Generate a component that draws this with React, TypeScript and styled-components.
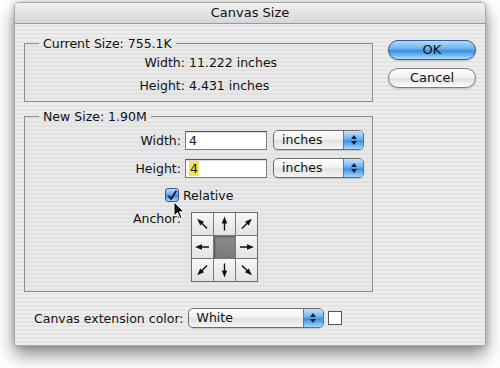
import React from 'react'
import styled, { createGlobalStyle } from 'styled-components'

const GlobalStyle = createGlobalStyle`
	html, body {
		margin: 0;
		padding: 0;
		background: #ffffff;
	}
	body {
		font-family: 'DejaVu Sans', 'Liberation Sans', sans-serif;
		font-size: 12.5px;
		color: #111;
	}
`

const stripes = `repeating-linear-gradient(to bottom, #ededed 0px, #ededed 2px, #e5e5e5 2px, #e5e5e5 4px)`

/** 锚点方向，角度从正上方顺时针 */
const anchors = [315, 0, 45, 270, -1, 90, 225, 180, 135]

function Arrow({ angle }: { angle: number }) {
	return (
		<svg width='21' height='22' viewBox='0 0 21 22'>
			<g transform={`rotate(${angle} 10.5 11)`}>
				<line x1='10.5' y1='17.5' x2='10.5' y2='8.5' stroke='#111' strokeWidth='1.4' />
				<polygon points='10.5,3.5 7.8,10.5 13.2,10.5' fill='#111' />
			</g>
		</svg>
	)
}

function Stepper() {
	return (
		<svg width='8' height='12' viewBox='0 0 8 12'>
			<polygon points='4,1 7,5 1,5' fill='#10233f' />
			<polygon points='4,11 7,7 1,7' fill='#10233f' />
		</svg>
	)
}

function Popup({ value, width }: { value: string; width: number }) {
	return (
		<SelectBox $width={width}>
			<SelectText>{value}</SelectText>
			<SelectArrows>
				<Stepper />
			</SelectArrows>
		</SelectBox>
	)
}

function App() {
	return (
		<Page>
			<GlobalStyle />
			<Window>
				<TitleBar>Canvas Size</TitleBar>
				<Body>
					<MainRow>
						<Groups>
							<Group>
								<Legend>Current Size: 755.1K</Legend>
								<InfoGrid>
									<Label>Width:</Label>
									<span>11.222 inches</span>
									<Label>Height:</Label>
									<span>4.431 inches</span>
								</InfoGrid>
							</Group>
							<Group $pad='6px 0 9px'>
								<Legend>New Size: 1.90M</Legend>
								<FormGrid>
									<Label>Width:</Label>
									<FieldRow>
										<TextInput>4</TextInput>
										<Popup value='inches' width={91} />
									</FieldRow>
									<Label>Height:</Label>
									<FieldRow>
										<TextInput>
											<Selected>4</Selected>
										</TextInput>
										<Popup value='inches' width={91} />
									</FieldRow>
								</FormGrid>
								<CheckRow>
									<CheckBox>
										<svg width='14' height='14' viewBox='0 0 14 14'>
											<path d='M3 7 L6 10.5 L12 1' stroke='#0b1a33' strokeWidth='2.2' fill='none' />
										</svg>
									</CheckBox>
									<span>Relative</span>
								</CheckRow>
								<AnchorRow>
									<Label>Anchor:</Label>
									<AnchorGrid>
										{anchors.map((a, i) => (
											<AnchorCell key={i} $active={a < 0}>
												{a >= 0 && <Arrow angle={a} />}
											</AnchorCell>
										))}
									</AnchorGrid>
								</AnchorRow>
							</Group>
						</Groups>
						<Buttons>
							<Button $primary>OK</Button>
							<Button>Cancel</Button>
						</Buttons>
					</MainRow>
					<ColorRow>
						<span>Canvas extension color:</span>
						<Popup value='White' width={136} />
						<Swatch />
					</ColorRow>
				</Body>
			</Window>
			<Cursor>
				<svg width='12' height='19' viewBox='0 0 12 19'>
					<path
						d='M1 1 L1 15 L4.5 11.5 L7 17.5 L9 16.6 L6.6 10.8 L11 10.8 Z'
						fill='#000'
						stroke='#fff'
						strokeWidth='1'
					/>
				</svg>
			</Cursor>
		</Page>
	)
}

const Page = styled.div`
	position: relative;
	width: 500px;
	height: 368px;
	padding: 2px 0 0 14px;
	box-sizing: border-box;
`

const Window = styled.div`
	width: 472px;
	height: 344px;
	background: ${stripes};
	border: 1px solid #a9a9a9;
	box-sizing: border-box;
	border-radius: 5px 5px 0 0;
	box-shadow: 0 9px 18px rgba(0, 0, 0, 0.45), 0 0 6px rgba(0, 0, 0, 0.2);
	display: flex;
	flex-direction: column;
	overflow: hidden;
`

const TitleBar = styled.div`
	height: 20px;
	line-height: 20px;
	text-align: center;
	font-size: 13px;
	background: linear-gradient(to bottom, #f2f2f2, #d6d6d6);
	border-bottom: 1px solid #9a9a9a;
	color: #111;
`

const Body = styled.div`
	flex: 1;
	display: flex;
	flex-direction: column;
	padding: 12px 9px 0 9px;
`

const MainRow = styled.div`
	display: flex;
	gap: 15px;
`

const Groups = styled.div`
	width: 349px;
	display: flex;
	flex-direction: column;
	gap: 7px;
`

const Group = styled.fieldset<{ $pad?: string }>`
	margin: 0;
	min-width: 0;
	padding: ${(p) => p.$pad || '4px 0 8px'};
	border: 1px solid #8e8e8e;
	background: rgba(0, 0, 0, 0.015);
`

const Legend = styled.legend`
	margin-left: 14px;
	padding: 0 4px;
	line-height: 15px;
`

const Label = styled.span`
	text-align: right;
`

const InfoGrid = styled.div`
	display: grid;
	grid-template-columns: 160px 1fr;
	column-gap: 4px;
	row-gap: 8px;
	line-height: 15px;
`

const FormGrid = styled.div`
	display: grid;
	grid-template-columns: 156px 1fr;
	column-gap: 4px;
	row-gap: 8px;
	align-items: center;
`

const FieldRow = styled.div`
	display: flex;
	align-items: center;
	gap: 6px;
`

const TextInput = styled.div`
	width: 82px;
	height: 19px;
	box-sizing: border-box;
	border: 1px solid #7d7d7d;
	border-top-color: #555;
	background: #fff;
	padding: 1px 3px;
	line-height: 15px;
	box-shadow: inset 0 1px 1px rgba(0, 0, 0, 0.15);
`

const Selected = styled.span`
	background: #f3e35a;
	padding: 0 1px;
`

const SelectBox = styled.div<{ $width: number }>`
	width: ${(p) => p.$width}px;
	height: 20px;
	box-sizing: border-box;
	display: flex;
	border: 1px solid #6d6d6d;
	border-radius: 5px;
	overflow: hidden;
	background: linear-gradient(to bottom, #ffffff 0%, #f1f1f1 45%, #e2e2e2 55%, #f6f6f6 100%);
	box-shadow: 0 1px 1px rgba(0, 0, 0, 0.15);
`

const SelectText = styled.span`
	flex: 1;
	padding-left: 8px;
	line-height: 18px;
`

const SelectArrows = styled.span`
	width: 19px;
	display: flex;
	align-items: center;
	justify-content: center;
	border-left: 1px solid #4a7fb5;
	background: linear-gradient(to bottom, #c4e2fb 0%, #6eb1ee 45%, #3d8fdf 55%, #a6d6fb 100%);
`

const CheckRow = styled.div`
	display: flex;
	align-items: center;
	gap: 4px;
	margin: 9px 0 0 140px;
	height: 16px;
`

const CheckBox = styled.span`
	width: 14px;
	height: 14px;
	box-sizing: border-box;
	border: 1px solid #33598a;
	border-radius: 3px;
	background: linear-gradient(to bottom, #bfe0fb, #5aa2e6 50%, #3a8ade 55%, #a9d8fb);
	display: flex;
	overflow: visible;
`

const AnchorRow = styled.div`
	display: grid;
	grid-template-columns: 156px auto;
	column-gap: 10px;
	align-items: start;
	margin-top: 9px;
	line-height: 14px;
`

const AnchorGrid = styled.div`
	display: grid;
	grid-template-columns: repeat(3, 21px);
	grid-template-rows: repeat(3, 22px);
	gap: 1px;
	background: #7a7a7a;
	border: 1px solid #6a6a6a;
	width: max-content;
`

const AnchorCell = styled.div<{ $active?: boolean }>`
	width: 21px;
	height: 22px;
	background: ${(p) =>
		p.$active
			? 'linear-gradient(to bottom, #8c8c8c, #7a7a7a)'
			: 'linear-gradient(to bottom, #f7f7f7, #e3e3e3)'};
	box-shadow: ${(p) => (p.$active ? 'inset 1px 1px 2px rgba(0,0,0,0.4)' : 'none')};
`

const Buttons = styled.div`
	display: flex;
	flex-direction: column;
	gap: 8px;
	margin-top: 4px;
	width: 88px;
`

const Button = styled.div<{ $primary?: boolean }>`
	height: 20px;
	box-sizing: border-box;
	border-radius: 10px;
	text-align: center;
	line-height: 18px;
	font-size: 13px;
	border: 1px solid ${(p) => (p.$primary ? '#2f5d94' : '#7d7d7d')};
	background: ${(p) =>
		p.$primary
			? 'linear-gradient(to bottom, #b6dcfa 0%, #6aaeec 45%, #3b8de0 55%, #7fc3f7 85%, #b4e0fc 100%)'
			: 'linear-gradient(to bottom, #ffffff 0%, #f3f3f3 45%, #e0e0e0 55%, #f5f5f5 85%, #ffffff 100%)'};
	box-shadow: 0 1px 2px rgba(0, 0, 0, 0.2);
`

const ColorRow = styled.div`
	display: flex;
	align-items: center;
	gap: 4px;
	margin: 16px 0 0 10px;
`

const Swatch = styled.span`
	width: 14px;
	height: 14px;
	box-sizing: border-box;
	border: 1px solid #555;
	background: #fff;
`

const Cursor = styled.div`
	position: absolute;
	left: 173px;
	top: 201px;
	width: 12px;
	height: 19px;
`

export default App
